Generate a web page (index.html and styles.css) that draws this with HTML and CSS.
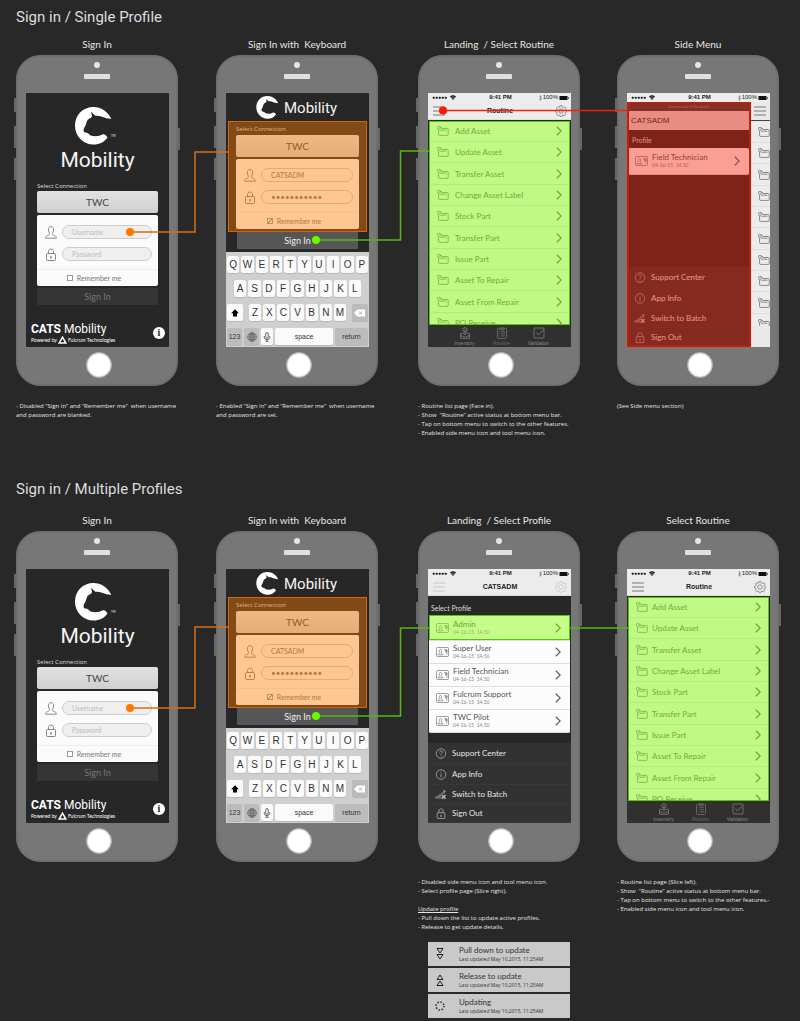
FILE: index.html
```html
<!DOCTYPE html>
<html lang="en">
<head>
<meta charset="utf-8">
<title>CATS Mobility – Sign in flows</title>
<link rel="stylesheet" href="styles.css">
</head>
<body>
<svg class="sprite" aria-hidden="true">
  <symbol id="cat" viewBox="0 0 37 38"><path fill="#fff" d="M36.3 12C33 4.500 26 0 18.500 0C8 0 0 8 0 18.700C0 29 8 37.500 18.500 37.500C24.500 37.500 29.500 35 32.500 30.500C31.500 28.500 30 27 28 27.300C24 29.500 20 29.800 15.500 28.500C13.500 26.500 12.500 25.800 10 25.500C8 24.500 8.500 23 9 21C11 18.500 11 16.500 12 14C13 12 15 11.500 16.800 10C17.200 8.500 16.500 7 16.200 5C17.800 6 19 7.800 20.500 8.700C23 9 25 8.800 27 9.800C30 11.200 33 11.500 36.300 12Z"/></symbol>
  <symbol id="user" viewBox="0 0 12 13"><path fill="none" stroke="#8a8a8a" d="M6 .7C3.800.7 3.200 2.300 3.400 4C3.500 5.600 4.300 6.600 4.500 7.500C4.600 8.800 3.800 9.200 2.600 9.600C1.200 10.100.7 10.700.6 12.200H11.400C11.300 10.700 10.800 10.100 9.400 9.600C8.200 9.200 7.400 8.800 7.500 7.500C7.700 6.600 8.500 5.600 8.600 4C8.800 2.300 8.200.7 6 .7Z"/></symbol>
  <symbol id="lock" viewBox="0 0 12 13"><g fill="none" stroke="currentColor" stroke-width=".9"><rect x="1.500" y="5.500" width="9" height="7" rx="1"/><path d="M3.500 5.500V3.500C3.500.2 8.500.2 8.500 3.500V5.500"/></g><path stroke="currentColor" stroke-width="1.200" d="M6 8V10.500"/></symbol>
  <symbol id="folder" viewBox="0 0 12 10"><path fill="none" stroke="#6f6f6f" stroke-width=".8" d="M1.600 4V8.600Q1.600 9.400 2.400 9.400H10.400Q11.200 9.400 11.200 8.600V3.200Q11.200 2.500 10.400 2.500H5L4.200 1.200H3M.6 1.200Q.6.5 1.300.5H2.500Q3.200.5 3.200 1.200V2.600Q3.200 3.300 2.500 3.300H1.300Q.6 3.300.6 2.600ZM3.200 4.200H9.500"/></symbol>
  <symbol id="chev" viewBox="0 0 6 10"><path fill="none" stroke="#5c5c5c" stroke-width="1.200" d="M.8.8L5.200 5L.8 9.200"/></symbol>
  <symbol id="burger" viewBox="0 0 12 10"><path stroke="#6c6c6c" stroke-width=".9" d="M0 1H12M0 5H12M0 9H12"/></symbol>
  <symbol id="gear" viewBox="0 0 12 12"><g fill="none" stroke="#777" stroke-width=".8"><path d="M5 .6H7L7.300 2L8.500 2.500L9.800 1.800L11 3.200L10.200 4.400L10.500 5.300L11.500 5.600V7L10.300 7.400L9.900 8.400L10.500 9.700L9.300 10.800L8 10.100L7 10.500L6.700 11.500H5.200L4.900 10.400L3.900 10L2.600 10.700L1.400 9.500L2.100 8.300L1.700 7.300L.5 7V5.500L1.700 5.100L2.200 4L1.500 2.800L2.600 1.700L3.800 2.400L4.700 2Z"/><circle cx="6" cy="6" r="2.200"/></g></symbol>
  <symbol id="wifi" viewBox="0 0 6 5"><path fill="#111" d="M3 5L0 1.500Q3-.8 6 1.500Z"/><path fill="none" stroke="#eee" stroke-width=".4" d="M1 2.400Q3 1 5 2.400M1.800 3.500Q3 2.600 4.200 3.500"/></symbol>
  <symbol id="battery" viewBox="0 0 10 4"><path fill="#111" d="M.5 0H8.500V4H.5ZM9 1.200H9.800V2.800H9Z"/></symbol>
  <symbol id="bt" viewBox="0 0 3 6"><path fill="none" stroke="#666" stroke-width=".5" d="M.5 1.500L2.500 4.200L1.500 5.500V.5L2.500 1.800L.5 4.500"/></symbol>
  <symbol id="badge" viewBox="0 0 13 10"><g fill="none" stroke="#777" stroke-width=".7"><rect x=".5" y=".5" width="12" height="9" rx="1"/><path d="M2 7.800C2 6.500 3.800 6.500 3.800 5.500C2.900 4 3.200 2.500 4.500 2.500S6 4 5.200 5.500C5.200 6.500 7 6.500 7 7.800ZM8 2.800H11V4.800H9.500M9.500 2.800V4.800M10.800 2.800V7.500"/></g></symbol>
  <symbol id="help" viewBox="0 0 12 12"><g fill="none" stroke="currentColor" stroke-width=".8"><circle cx="6" cy="6" r="5.200"/><path d="M4.500 4.800C4.500 2.700 7.500 2.700 7.500 4.500C7.500 5.700 6 5.700 6 7.200M6 8.300V9.200"/></g></symbol>
  <symbol id="info" viewBox="0 0 12 12"><g fill="none" stroke="currentColor" stroke-width=".8"><circle cx="6" cy="6" r="5.200"/><path d="M6 5V9M6 3V4"/></g></symbol>
  <symbol id="signal" viewBox="0 0 12 10"><path fill="none" stroke="currentColor" d="M1 9V7M3 9V6M5 9V4.500M7 5V3M9 4V1L10.500 2"/><path stroke="currentColor" stroke-width="1.600" d="M6.800 5.500L10.500 9.300M10.500 5.500L6.800 9.300"/></symbol>
  <symbol id="inventory" viewBox="0 0 12 12"><g fill="none" stroke="#777" stroke-width=".9"><circle cx="6" cy="2.800" r="2.200"/><path d="M6 2V7M4 5.500L6 8L8 5.500M3.500 6.500H1.500V11.300H10.500V6.500H8.500M1.500 9H4L5 10H7L8 9H10.500"/></g></symbol>
  <symbol id="clipboard" viewBox="0 0 12 12"><g fill="none" stroke="#6a6a6a" stroke-width=".9"><rect x="1.500" y="1.200" width="9" height="10.300" rx="1"/><path d="M4 1H8V2.800H4ZM3.200 4.700H4.200M5.200 4.700H9M3.200 6.800H4.200M5.200 6.800H9M3.200 8.900H4.200M5.200 8.900H9"/></g></symbol>
  <symbol id="check" viewBox="0 0 12 12"><g fill="none" stroke="#777" stroke-width=".9"><rect x="1" y="1" width="10" height="10" rx="1"/><path d="M3.500 5.500L5.500 8L10.500 2.500"/></g></symbol>
</svg>

<main class="page">
<section class="board">
  <h1 class="board-title">Sign in / Single Profile</h1>
  <div class="flow">
    <article class="step">
      <h2 class="step-title">Sign In</h2>
      <div class="phone"><i class="side left a"></i><i class="side left b"></i><i class="side left c"></i><i class="side right"></i><i class="camera"></i><i class="speaker"></i>
        <div class="screen login">
          <div class="brand"><svg class="cat"><use href="#cat"/></svg><span class="brand-name">Mobility</span><small class="tm">TM</small></div>
          <form class="form">
            <div class="fields">
              <label class="caption" for="c1">Select Connection</label>
              <select class="connection" id="c1"><option>TWC</option></select>
              <div class="card">
                <div class="field"><svg class="field-icon"><use href="#user"/></svg><input class="text" aria-label="Username" placeholder="Username"></div>
                <div class="field"><svg class="field-icon"><use href="#lock"/></svg><input class="text" type="password" aria-label="Password" placeholder="Password"></div>
                <label class="remember"><input class="tick" type="checkbox">Remember me</label>
              </div>
            </div>
            <button class="submit" type="button" disabled>Sign In</button>
          </form>
          <footer class="foot"><div><div class="foot-name"><b>CATS</b> Mobility</div><div class="powered">Powered by <svg class="tri" viewBox="0 0 9 8"><path fill="none" stroke="#fff" stroke-width="1.500" d="M4.500 1.200L7.900 7.100H1.100Z"/></svg> Fulcrum Technologies</div></div><button class="about" type="button">i</button></footer>
        </div>
        <i class="home"></i>
      </div>
      <div class="notes"><p>- Disabled “Sign In” and “Remember me”&nbsp; when username</p><p>and password are blanked.</p></div>
    </article>

    <article class="step">
      <h2 class="step-title">Sign In with&nbsp; Keyboard</h2>
      <div class="phone"><i class="side left a"></i><i class="side left b"></i><i class="side left c"></i><i class="side right"></i><i class="camera"></i><i class="speaker"></i>
        <div class="screen typing">
          <div class="brand compact"><svg class="cat"><use href="#cat"/></svg><span class="brand-name">Mobility</span></div>
          <form class="form">
            <div class="fields mark orange">
              <label class="caption" for="c2">Select Connection</label>
              <select class="connection" id="c2"><option>TWC</option></select>
              <div class="card">
                <div class="field"><svg class="field-icon"><use href="#user"/></svg><input class="text" aria-label="Username" value="CATSADM"></div>
                <div class="field"><svg class="field-icon"><use href="#lock"/></svg><input class="text dots" aria-label="Password" value="•••••••••••"></div>
                <label class="remember"><input class="tick" type="checkbox" checked>Remember me</label>
              </div>
            </div>
            <button class="submit ready" type="button">Sign In</button>
          </form>
          <div class="keyboard">
            <div class="keys"><button>Q</button><button>W</button><button>E</button><button>R</button><button>T</button><button>Y</button><button>U</button><button>I</button><button>O</button><button>P</button></div>
            <div class="keys second"><button>A</button><button>S</button><button>D</button><button>F</button><button>G</button><button>H</button><button>J</button><button>K</button><button>L</button></div>
            <div class="keys third"><button class="shift" aria-label="Shift"><svg class="glyph" viewBox="0 0 8 8"><path d="M4 .3L7.800 4.200H6V7.500H2V4.200H.2Z"/></svg></button><button>Z</button><button>X</button><button>C</button><button>V</button><button>B</button><button>N</button><button>M</button><button class="erase" aria-label="Delete"><svg class="glyph wide" viewBox="0 0 11 8"><path fill="#fff" d="M0 4L3.500.5H11V7.500H3.500Z"/><path stroke="#aaa" d="M5 2.500L8 5.500M8 2.500L5 5.500"/></svg></button></div>
            <div class="keys last"><button class="gray num">123</button><button class="gray globe" aria-label="Language"><svg class="glyph big" viewBox="0 0 10 10"><g fill="none" stroke="#555" stroke-width=".7"><circle cx="5" cy="5" r="4.300"/><ellipse cx="5" cy="5" rx="2" ry="4.300"/><path d="M.7 5H9.300M5 .7V9.300M1.500 2.800H8.500M1.500 7.200H8.500"/></g></svg></button><button class="mic" aria-label="Dictate"><svg class="glyph big" viewBox="0 0 10 10"><g fill="none" stroke="#444" stroke-width=".8"><rect x="3.700" y=".6" width="2.600" height="5.500" rx="1.300"/><path d="M2.300 4V5.500Q2.300 7.600 5 7.600Q7.700 7.600 7.700 5.500V4M5 7.600V9.300M3.500 9.300H6.500"/></g></svg></button><button class="space">space</button><button class="gray return">return</button></div>
          </div>
        </div>
        <i class="home"></i>
      </div>
      <div class="notes"><p>- Enabled “Sign In” and “Remember me”&nbsp; when username</p><p>and password are set.</p></div>
    </article>

    <article class="step">
      <h2 class="step-title">Landing&nbsp; / Select Routine</h2>
      <div class="phone"><i class="side left a"></i><i class="side left b"></i><i class="side left c"></i><i class="side right"></i><i class="camera"></i><i class="speaker"></i>
        <div class="screen">
          <div class="status"><span class="carrier">●●●●● <svg class="wifi"><use href="#wifi"/></svg></span><b>9:41 PM</b><span class="power"><svg class="bt"><use href="#bt"/></svg>100% <svg class="battery"><use href="#battery"/></svg></span></div>
          <div class="bar"><svg class="burger"><use href="#burger"/></svg><span>Routine</span><svg class="gear"><use href="#gear"/></svg></div>
          <nav class="list mark green">
            <a href="#"><svg class="folder"><use href="#folder"/></svg>Add Asset<svg class="chev"><use href="#chev"/></svg></a>
            <a href="#"><svg class="folder"><use href="#folder"/></svg>Update Asset<svg class="chev"><use href="#chev"/></svg></a>
            <a href="#"><svg class="folder"><use href="#folder"/></svg>Transfer Asset<svg class="chev"><use href="#chev"/></svg></a>
            <a href="#"><svg class="folder"><use href="#folder"/></svg>Change Asset Label<svg class="chev"><use href="#chev"/></svg></a>
            <a href="#"><svg class="folder"><use href="#folder"/></svg>Stock Part<svg class="chev"><use href="#chev"/></svg></a>
            <a href="#"><svg class="folder"><use href="#folder"/></svg>Transfer Part<svg class="chev"><use href="#chev"/></svg></a>
            <a href="#"><svg class="folder"><use href="#folder"/></svg>Issue Part<svg class="chev"><use href="#chev"/></svg></a>
            <a href="#"><svg class="folder"><use href="#folder"/></svg>Asset To Repair<svg class="chev"><use href="#chev"/></svg></a>
            <a href="#"><svg class="folder"><use href="#folder"/></svg>Asset From Repair<svg class="chev"><use href="#chev"/></svg></a>
            <a href="#"><svg class="folder"><use href="#folder"/></svg>PO Receive<svg class="chev"><use href="#chev"/></svg></a>
          </nav>
          <nav class="tabs"><a href="#"><svg><use href="#inventory"/></svg>Inventory</a><a href="#" class="current"><svg><use href="#clipboard"/></svg>Routine</a><a href="#"><svg><use href="#check"/></svg>Validation</a></nav>
        </div>
        <i class="home"></i>
      </div>
      <div class="notes"><p>- Routine list page (Face in).</p><p>- Show&nbsp; “Routine” active status at bottom menu bar.</p><p>- Tap on bottom menu to switch to the other features.</p><p>- Enabled side menu icon and tool menu icon.</p></div>
    </article>

    <article class="step">
      <h2 class="step-title">Side Menu</h2>
      <div class="phone"><i class="side left a"></i><i class="side left b"></i><i class="side left c"></i><i class="side right"></i><i class="camera"></i><i class="speaker"></i>
        <div class="screen">
          <div class="status"><span class="carrier">●●●●● <svg class="wifi"><use href="#wifi"/></svg></span><b>9:41 PM</b><span class="power"><svg class="bt"><use href="#bt"/></svg>100% <svg class="battery"><use href="#battery"/></svg></span></div>
          <div class="split">
            <aside class="drawer mark red">
              <p class="network">Connected to Network</p>
              <p class="account">CATSADM</p>
              <p class="group">Profile</p>
              <a href="#" class="profile single"><svg class="badge"><use href="#badge"/></svg><span><b>Field Technician</b><small>04-16-15&nbsp; 14.50</small></span><svg class="chev"><use href="#chev"/></svg></a>
              <nav class="menu"><a href="#"><svg><use href="#help"/></svg>Support Center</a><a href="#"><svg><use href="#info"/></svg>App Info</a><a href="#"><svg><use href="#signal"/></svg>Switch to Batch</a><a href="#"><svg><use href="#lock"/></svg>Sign Out</a></nav>
            </aside>
            <div class="peek">
              <div class="peek-bar"><svg class="burger"><use href="#burger"/></svg></div>
              <div class="list"><i><svg class="folder"><use href="#folder"/></svg></i><i><svg class="folder"><use href="#folder"/></svg></i><i><svg class="folder"><use href="#folder"/></svg></i><i><svg class="folder"><use href="#folder"/></svg></i><i><svg class="folder"><use href="#folder"/></svg></i><i><svg class="folder"><use href="#folder"/></svg></i><i><svg class="folder"><use href="#folder"/></svg></i><i><svg class="folder"><use href="#folder"/></svg></i><i><svg class="folder"><use href="#folder"/></svg></i><i><svg class="folder"><use href="#folder"/></svg></i></div>
            </div>
          </div>
        </div>
        <i class="home"></i>
      </div>
      <div class="notes"><p>(See Side menu section)</p></div>
    </article>
    <svg class="wires" viewBox="0 0 800 220"><g fill="none" stroke-width="1.500"><path stroke="#d86d10" d="M129 194H195V114H228"/><path stroke="#58b814" d="M316 202H400.500V113H429"/><path stroke="#f0220e" d="M443 72.500H628"/></g><circle cx="130" cy="194" r="4" fill="#ff7800"/><circle cx="316" cy="202" r="4" fill="#6df500"/><circle cx="443" cy="72.500" r="4" fill="#ff1500"/></svg>
  </div>
</section>

<section class="board">
  <h1 class="board-title">Sign in / Multiple Profiles</h1>
  <div class="flow">
    <article class="step">
      <h2 class="step-title">Sign In</h2>
      <div class="phone"><i class="side left a"></i><i class="side left b"></i><i class="side left c"></i><i class="side right"></i><i class="camera"></i><i class="speaker"></i>
        <div class="screen login">
          <div class="brand"><svg class="cat"><use href="#cat"/></svg><span class="brand-name">Mobility</span><small class="tm">TM</small></div>
          <form class="form">
            <div class="fields">
              <label class="caption" for="c3">Select Connection</label>
              <select class="connection" id="c3"><option>TWC</option></select>
              <div class="card">
                <div class="field"><svg class="field-icon"><use href="#user"/></svg><input class="text" aria-label="Username" placeholder="Username"></div>
                <div class="field"><svg class="field-icon"><use href="#lock"/></svg><input class="text" type="password" aria-label="Password" placeholder="Password"></div>
                <label class="remember"><input class="tick" type="checkbox">Remember me</label>
              </div>
            </div>
            <button class="submit" type="button" disabled>Sign In</button>
          </form>
          <footer class="foot"><div><div class="foot-name"><b>CATS</b> Mobility</div><div class="powered">Powered by <svg class="tri" viewBox="0 0 9 8"><path fill="none" stroke="#fff" stroke-width="1.500" d="M4.500 1.200L7.900 7.100H1.100Z"/></svg> Fulcrum Technologies</div></div><button class="about" type="button">i</button></footer>
        </div>
        <i class="home"></i>
      </div>
    </article>

    <article class="step">
      <h2 class="step-title">Sign In with&nbsp; Keyboard</h2>
      <div class="phone"><i class="side left a"></i><i class="side left b"></i><i class="side left c"></i><i class="side right"></i><i class="camera"></i><i class="speaker"></i>
        <div class="screen typing">
          <div class="brand compact"><svg class="cat"><use href="#cat"/></svg><span class="brand-name">Mobility</span></div>
          <form class="form">
            <div class="fields mark orange">
              <label class="caption" for="c4">Select Connection</label>
              <select class="connection" id="c4"><option>TWC</option></select>
              <div class="card">
                <div class="field"><svg class="field-icon"><use href="#user"/></svg><input class="text" aria-label="Username" value="CATSADM"></div>
                <div class="field"><svg class="field-icon"><use href="#lock"/></svg><input class="text dots" aria-label="Password" value="•••••••••••"></div>
                <label class="remember"><input class="tick" type="checkbox" checked>Remember me</label>
              </div>
            </div>
            <button class="submit ready" type="button">Sign In</button>
          </form>
          <div class="keyboard">
            <div class="keys"><button>Q</button><button>W</button><button>E</button><button>R</button><button>T</button><button>Y</button><button>U</button><button>I</button><button>O</button><button>P</button></div>
            <div class="keys second"><button>A</button><button>S</button><button>D</button><button>F</button><button>G</button><button>H</button><button>J</button><button>K</button><button>L</button></div>
            <div class="keys third"><button class="shift" aria-label="Shift"><svg class="glyph" viewBox="0 0 8 8"><path d="M4 .3L7.800 4.200H6V7.500H2V4.200H.2Z"/></svg></button><button>Z</button><button>X</button><button>C</button><button>V</button><button>B</button><button>N</button><button>M</button><button class="erase" aria-label="Delete"><svg class="glyph wide" viewBox="0 0 11 8"><path fill="#fff" d="M0 4L3.500.5H11V7.500H3.500Z"/><path stroke="#aaa" d="M5 2.500L8 5.500M8 2.500L5 5.500"/></svg></button></div>
            <div class="keys last"><button class="gray num">123</button><button class="gray globe" aria-label="Language"><svg class="glyph big" viewBox="0 0 10 10"><g fill="none" stroke="#555" stroke-width=".7"><circle cx="5" cy="5" r="4.300"/><ellipse cx="5" cy="5" rx="2" ry="4.300"/><path d="M.7 5H9.300M5 .7V9.300M1.500 2.800H8.500M1.500 7.200H8.500"/></g></svg></button><button class="mic" aria-label="Dictate"><svg class="glyph big" viewBox="0 0 10 10"><g fill="none" stroke="#444" stroke-width=".8"><rect x="3.700" y=".6" width="2.600" height="5.500" rx="1.300"/><path d="M2.300 4V5.500Q2.300 7.600 5 7.600Q7.700 7.600 7.700 5.500V4M5 7.600V9.300M3.500 9.300H6.500"/></g></svg></button><button class="space">space</button><button class="gray return">return</button></div>
          </div>
        </div>
        <i class="home"></i>
      </div>
    </article>

    <article class="step">
      <h2 class="step-title">Landing&nbsp; / Select Profile</h2>
      <div class="phone"><i class="side left a"></i><i class="side left b"></i><i class="side left c"></i><i class="side right"></i><i class="camera"></i><i class="speaker"></i>
        <div class="screen">
          <div class="status"><span class="carrier">●●●●● <svg class="wifi"><use href="#wifi"/></svg></span><b>9:41 PM</b><span class="power"><svg class="bt"><use href="#bt"/></svg>100% <svg class="battery"><use href="#battery"/></svg></span></div>
          <div class="bar off"><svg class="burger"><use href="#burger"/></svg><span>CATSADM</span><svg class="gear"><use href="#gear"/></svg></div>
          <p class="group select">Select Profile</p>
          <nav class="profiles">
            <a href="#" class="profile mark green"><svg class="badge"><use href="#badge"/></svg><span><b>Admin</b><small>04-16-15&nbsp; 14.50</small></span><svg class="chev"><use href="#chev"/></svg></a>
            <a href="#" class="profile"><svg class="badge"><use href="#badge"/></svg><span><b>Super User</b><small>04-16-15&nbsp; 14.50</small></span><svg class="chev"><use href="#chev"/></svg></a>
            <a href="#" class="profile"><svg class="badge"><use href="#badge"/></svg><span><b>Field Technician</b><small>04-16-15&nbsp; 14.50</small></span><svg class="chev"><use href="#chev"/></svg></a>
            <a href="#" class="profile"><svg class="badge"><use href="#badge"/></svg><span><b>Fulcrum Support</b><small>04-16-15&nbsp; 14.50</small></span><svg class="chev"><use href="#chev"/></svg></a>
            <a href="#" class="profile"><svg class="badge"><use href="#badge"/></svg><span><b>TWC Pilot</b><small>04-16-15&nbsp; 14.50</small></span><svg class="chev"><use href="#chev"/></svg></a>
          </nav>
          <nav class="menu"><a href="#"><svg><use href="#help"/></svg>Support Center</a><a href="#"><svg><use href="#info"/></svg>App Info</a><a href="#"><svg><use href="#signal"/></svg>Switch to Batch</a><a href="#"><svg><use href="#lock"/></svg>Sign Out</a></nav>
        </div>
        <i class="home"></i>
      </div>
      <div class="notes"><p>- Disabled side menu icon and tool menu icon.</p><p>- Select profile page (Slice right).</p><h3>Update profile</h3><p>- Pull down the list to update active profiles.</p><p>- Release to get update details.</p></div>
      <div class="updates">
        <div class="update"><svg viewBox="0 0 10 14"><path fill="none" stroke="#222" d="M2 1.500H8L5 6ZM2 7.500H8L5 12Z"/></svg><div><b>Pull down to update</b><small>Last updated May 10,2015, 11:25AM</small></div></div>
        <div class="update"><svg viewBox="0 0 10 14"><path fill="none" stroke="#222" d="M2 6.500H8L5 2ZM2 12.500H8L5 8Z"/></svg><div><b>Release to update</b><small>Last updated May 10,2015, 11:25AM</small></div></div>
        <div class="update"><svg viewBox="0 0 10 14"><circle cx="5" cy="7" r="4" fill="none" stroke="#222" stroke-width="1.500" stroke-dasharray="1.400 1.740"/></svg><div><b>Updating</b><small>Last updated May 10,2015, 11:25AM</small></div></div>
      </div>
    </article>

    <article class="step">
      <h2 class="step-title">Select Routine</h2>
      <div class="phone"><i class="side left a"></i><i class="side left b"></i><i class="side left c"></i><i class="side right"></i><i class="camera"></i><i class="speaker"></i>
        <div class="screen">
          <div class="status"><span class="carrier">●●●●● <svg class="wifi"><use href="#wifi"/></svg></span><b>9:41 PM</b><span class="power"><svg class="bt"><use href="#bt"/></svg>100% <svg class="battery"><use href="#battery"/></svg></span></div>
          <div class="bar"><svg class="burger"><use href="#burger"/></svg><span>Routine</span><svg class="gear"><use href="#gear"/></svg></div>
          <nav class="list near mark green">
            <a href="#"><svg class="folder"><use href="#folder"/></svg>Add Asset<svg class="chev"><use href="#chev"/></svg></a>
            <a href="#"><svg class="folder"><use href="#folder"/></svg>Update Asset<svg class="chev"><use href="#chev"/></svg></a>
            <a href="#"><svg class="folder"><use href="#folder"/></svg>Transfer Asset<svg class="chev"><use href="#chev"/></svg></a>
            <a href="#"><svg class="folder"><use href="#folder"/></svg>Change Asset Label<svg class="chev"><use href="#chev"/></svg></a>
            <a href="#"><svg class="folder"><use href="#folder"/></svg>Stock Part<svg class="chev"><use href="#chev"/></svg></a>
            <a href="#"><svg class="folder"><use href="#folder"/></svg>Transfer Part<svg class="chev"><use href="#chev"/></svg></a>
            <a href="#"><svg class="folder"><use href="#folder"/></svg>Issue Part<svg class="chev"><use href="#chev"/></svg></a>
            <a href="#"><svg class="folder"><use href="#folder"/></svg>Asset To Repair<svg class="chev"><use href="#chev"/></svg></a>
            <a href="#"><svg class="folder"><use href="#folder"/></svg>Asset From Repair<svg class="chev"><use href="#chev"/></svg></a>
            <a href="#"><svg class="folder"><use href="#folder"/></svg>PO Receive<svg class="chev"><use href="#chev"/></svg></a>
          </nav>
          <nav class="tabs"><a href="#"><svg><use href="#inventory"/></svg>Inventory</a><a href="#" class="current"><svg><use href="#clipboard"/></svg>Routine</a><a href="#"><svg><use href="#check"/></svg>Validation</a></nav>
        </div>
        <i class="home"></i>
      </div>
      <div class="notes"><p>- Routine list page (Slice left).</p><p>- Show&nbsp; “Routine” active status at bottom menu bar.</p><p>- Tap on bottom menu to switch to the other features.-</p><p>- Enabled side menu icon and tool menu icon.</p></div>
    </article>
    <svg class="wires" viewBox="0 0 800 220"><g fill="none" stroke-width="1.500"><path stroke="#d86d10" d="M129 194H195V113H228"/><path stroke="#58b814" d="M316 202H400.500V114H429M570 114H628"/></g><circle cx="130" cy="194" r="4" fill="#ff7800"/><circle cx="316" cy="202" r="4" fill="#6df500"/></svg>
  </div>
</section>
</main>
</body>
</html>
```
FILE: styles.css
```css
* { box-sizing: border-box; }
body { margin: 0; background: #282828; color: #e6e6e6; font: 7px/9px Lato, "Open Sans", sans-serif; }
h1, h2, h3, p { margin: 0; font-weight: 400; }
a { color: inherit; text-decoration: none; }
svg { display: block; flex: none; }
button, input, select { font: inherit; color: inherit; margin: 0; padding: 0; border: 0; appearance: none; }
.sprite { position: absolute; width: 0; height: 0; }

.page { padding-top: 9px; }
.board + .board { margin-top: 43px; }
.board-title { padding-left: 16px; margin-bottom: 13px; font: 15px/16px Roboto, sans-serif; color: #ddd; }
.board + .board .board-title { margin-bottom: 17px; }
.flow { position: relative; display: grid; grid-template-columns: 200fr 202fr 199fr 183fr; padding-left: 16px; }
.wires { position: absolute; left: 0; top: 0; width: 800px; height: 220px; pointer-events: none; }
.step-title { width: 162px; margin-bottom: 5px; text-align: center; font-size: 10px; line-height: 12px; white-space: nowrap; }

.phone { position: relative; width: 162px; padding: 38px 9px 7px 10px; border: 1px solid #6c6c6c; border-radius: 24px; background: #777; box-shadow: inset 0 0 0 1px #707070; }
.camera, .speaker, .side { position: absolute; background: #666; }
.camera { left: 77px; top: 6px; width: 6px; height: 6px; border-radius: 50%; background: #e6e6e6; }
.speaker { left: 67px; top: 18px; width: 26px; height: 5px; border-radius: 1px; background: #e0e0e0; }
.side { width: 2px; height: 22px; }
.side.left { left: -3px; }
.side.right { right: -3px; top: 72px; }
.side.a { top: 42px; height: 14px; }
.side.b { top: 70px; }
.side.c { top: 102px; }
.home { display: block; width: 26px; height: 26px; margin: 5px 53px 0 59px; border: 1px solid #aaa; border-radius: 50%; background: #fff; box-shadow: inset 0 0 0 1px #e4e4e4; }
.screen { display: flex; flex-direction: column; min-height: 254px; margin: -1px; margin-bottom: 0; background: #272727; }

.mark { position: relative; }
.mark::after { content: ""; position: absolute; inset: 0; pointer-events: none; border: 1px solid; }
.orange::after { background: rgba(255, 123, 0, .42); border-color: #d4660a; }
.green::after { background: rgba(130, 255, 0, .45); border-color: #57c60a; }
.red::after { background: rgba(245, 30, 10, .42); border: 2px solid #c81c08; border-top-width: 1px; }

.brand { position: relative; display: flex; flex-direction: column; align-items: center; padding-top: 14px; color: #f4f4f4; }
.cat { width: 37px; height: 38px; margin-right: 8px; }
.brand-name { margin-top: 3px; font: 21px/25px Roboto, sans-serif; }
.tm { position: absolute; left: 85px; top: 41px; font-size: 3px; line-height: 4px; }
.compact { flex-direction: row; justify-content: center; padding: 3px 2px 2px 0; }
.compact .cat { width: 23px; height: 23px; margin-right: 5px; }
.compact .brand-name { margin: 0; font-size: 15px; line-height: 20px; }
.login .form { padding: 8px 11px 0; }
.caption { display: block; line-height: 10px; color: #ddd; font-family: "Open Sans", sans-serif; font-size: 6px; }
.connection { display: block; width: 100%; height: 22px; border-radius: 2px; background: linear-gradient(#e2e2e2, #cfcfcf); color: #444; font-size: 10px; text-align: center; text-align-last: center; }
.card { margin-top: 2px; padding-top: 10px; border-radius: 2px; background: #fbfbfb; color: #777; }
.field { display: flex; align-items: center; gap: 5px; height: 14px; margin-bottom: 8px; padding: 0 6px 0 8px; }
.field-icon { width: 12px; height: 13px; color: #777; }
.text { flex: 1; min-width: 0; height: 14px; padding: 0 9px; border: 1px solid #ccc; border-radius: 7px; background: #efefef; }
.text::placeholder { color: #bbb; }
.text.dots { font-size: 8px; }
.orange .text { background: #fafafa; }
.remember { display: flex; align-items: center; justify-content: center; gap: 4px; height: 17px; padding-right: 7px; border-top: 1px solid #eee; }
.tick { width: 6px; height: 6px; border: 1px solid #999; background: #fff; }
.tick:checked { background: linear-gradient(135deg, #fff 40%, #777 50%, #fff 65%); }
.submit { display: block; width: 100%; height: 17px; margin-top: 2px; background: #353535; color: #777; font-size: 9px; text-align: center; }
.foot { display: flex; justify-content: space-between; align-items: center; margin-top: auto; padding: 0 4px 3px 5px; color: #fff; }
.foot-name { font: 12px/14px Roboto, sans-serif; }
.powered { display: flex; align-items: center; gap: 1px; font-size: 5px; line-height: 7px; white-space: nowrap; }
.tri { width: 9px; height: 8px; }
.about { width: 12px; height: 12px; border-radius: 50%; background: #fff; color: #222; font: bold 10px/12px "Liberation Serif", serif; }

.typing .fields { margin: 0 2px; padding: 2px 8px 3px; }
.typing .caption { line-height: 12px; }
.typing .card { padding-top: 9px; }
.submit.ready { width: 121px; height: 17px; margin: 0 auto; background: #565656; color: #eee; }
.keyboard { display: flex; flex-direction: column; justify-content: space-between; flex: 1; margin-top: 3px; padding: 4px 1px 2px; background: #cfcfcf; font: 10px/16px "Liberation Sans", sans-serif; color: #333; }
.keys { display: flex; gap: 2px; }
.keys button { flex: 1; min-width: 0; height: 17px; border-radius: 2px; background: #fafafa; box-shadow: 0 1px 0 #b8b8b8; display: flex; align-items: center; justify-content: center; }
.second { padding: 0 7px; }
.keys .shift, .keys .erase { flex: none; width: 16px; }
.keys .shift { margin-right: 4px; }
.keys .erase { margin-left: 4px; background: #bbb; }
.glyph { width: 8px; height: 8px; }
.glyph.wide { width: 11px; }
.glyph.big { width: 10px; height: 10px; }
.last { font-size: 7px; }
.keys .gray { background: #bcbcbc; }
.keys .num, .keys .globe { flex: 0 0 15px; }
.keys .mic { flex: 0 0 12px; }
.keys .return { flex: 0 0 33px; }

.status { display: grid; grid-template-columns: 1fr auto 1fr; align-items: center; height: 9px; padding: 0 2px 0 4px; background: #ececec; color: #222; font: 6px/9px "Liberation Sans", sans-serif; }
.carrier, .power { display: flex; align-items: center; gap: 1px; white-space: nowrap; }
.carrier { gap: 3px; font-size: 5px; color: #111; }
.power { justify-content: flex-end; }
.wifi { width: 6px; height: 5px; }
.bt { width: 3px; height: 6px; }
.battery { width: 10px; height: 4px; }
.bar { display: flex; align-items: center; justify-content: space-between; height: 18px; padding: 0 4px 0 5px; background: #ececec; color: #222; font: bold 7px/18px "Liberation Sans", sans-serif; border-bottom: 1px solid #ddd; }
.burger { width: 12px; height: 10px; }
.gear { width: 12px; height: 12px; }
.off svg { opacity: .3; }

.list { height: 204px; margin: 1px 1px 0; overflow: hidden; background: #f4f4f4; color: #666; font-size: 8px; line-height: 10px; }
.list > * { display: flex; align-items: center; gap: 6px; height: 21px; padding: 0 8px; border-bottom: 1px solid #ddd; }
.list > :nth-child(3n) { height: 22px; }
.folder { width: 12px; height: 10px; }
.chev { width: 6px; height: 10px; margin-left: auto; }
.near > * { gap: 4px; }
.tabs { display: flex; justify-content: center; gap: 2px; flex: 1; padding: 2px 0 0 4px; background: #303030; color: #888; font: 5px/6px "Liberation Sans", sans-serif; }
.tabs a { display: flex; flex-direction: column; align-items: center; width: 35px; }
.tabs svg { width: 12px; height: 12px; margin-bottom: 1px; }
.tabs .current { color: #6a6a6a; }

.split { display: flex; flex: 1; background: #e9e9e9; }
.drawer { display: flex; flex-direction: column; flex: 1; background: #272727; }
.network { height: 9px; background: #3c3c3c; color: #999; font-size: 4px; text-align: center; }
.account { height: 19px; padding-left: 4px; background: #dcdcdc; color: #222; font: 8px/19px "Liberation Sans", sans-serif; }
.group { padding: 6px 5px 3px; color: #ddd; }
.select { padding: 8px 3px 2px; }
.peek { width: 19px; overflow: hidden; }
.peek-bar { height: 19px; padding: 4px 3px; border-bottom: 1px solid #444; }
.peek .list { width: 19px; margin: 1px 0 0; background: #ececec; }
.peek .list > * { padding: 0 0 0 7px; }
.profiles { margin: 0 1px; overflow: hidden; border-radius: 0 0 2px 2px; }
.profile { display: flex; align-items: center; gap: 4px; height: 23px; padding: 0 9px 0 7px; border-bottom: 1px solid #ddd; background: #fcfcfc; color: #555; }
.profile.mark { height: 26px; }
.profile.single { height: 27px; margin: 0 2px 0 1px; border-radius: 2px; }
.profile b { display: block; font-weight: 400; font-size: 8px; line-height: 9px; }
.profile small { display: block; font-size: 5px; line-height: 7px; color: #888; }
.badge { width: 13px; height: 10px; }
.menu { margin-top: auto; background: #323232; color: #e6e6e6; font-size: 8px; }
.menu a { display: flex; align-items: center; gap: 5px; height: 19px; padding-left: 7px; border-bottom: 1px solid #383838; }
.menu a:nth-child(-n+2) { height: 21px; }
.menu svg { width: 12px; height: 11px; color: #b8b8b8; }

.notes { margin-top: 16px; font-family: "Open Sans", sans-serif; font-size: 6px; white-space: nowrap; }
.notes h3 { margin-top: 9px; font-size: 6px; text-decoration: underline; }
.updates { display: grid; gap: 2px; width: 142px; margin: 10px 0 3px 10px; }
.update { display: flex; align-items: center; gap: 14px; height: 24px; padding-left: 7px; background: #c9c9c9; color: #333; white-space: nowrap; }
.update svg { width: 10px; height: 14px; }
.update b { display: block; font-weight: 400; font-size: 8px; line-height: 10px; }
.update small { display: block; font-family: "Open Sans", sans-serif; font-size: 5px; line-height: 8px; }
```
